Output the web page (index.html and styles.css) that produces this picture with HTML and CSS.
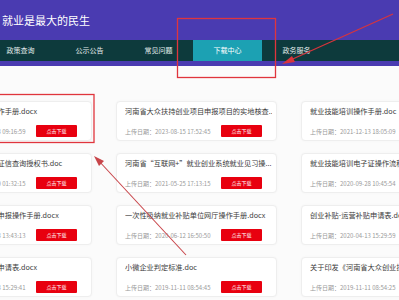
FILE: index.html
```html
<!DOCTYPE html>
<html>
<head>
    <title>下载中心</title>
    <link rel="stylesheet" href="styles.css">
</head>
<body>
    <div class="header">
        <div class="site-title">就业是最大的民生</div>
        <div class="nav">
            <a class="nav-item">政策查询</a>
            <a class="nav-item">公示公告</a>
            <a class="nav-item">常见问题</a>
            <a class="nav-item active">下载中心</a>
            <a class="nav-item">政务服务</a>
        </div>
    </div>

    <div class="main">
        <div class="file-grid" id="fileGrid">
            <!-- cards are filled in below -->
        </div>
    </div>

    <svg class="marks" width="399" height="300" viewBox="0 0 399 300">
        <rect x="177.5" y="18.5" width="98" height="59" fill="none" stroke="#e0353d" stroke-width="1.3"/>
        <rect x="-2" y="94.5" width="96" height="48" fill="none" stroke="#e0353d" stroke-width="1.3"/>
        <line x1="393" y1="14" x2="286" y2="62" stroke="#d8343c" stroke-width="1.2"/>
        <polygon points="282,64 292,56 295,62" fill="#d8343c"/>
        <line x1="186" y1="255" x2="98" y2="160" stroke="#c8454a" stroke-width="1.1"/>
        <polygon points="94,156 104,161 99,166" fill="#c8454a"/>
    </svg>

    <script>
        const files = [
            { name: "就业创业证网办操作手册.docx", date: "2023-08-13 09:16:59" },
            { name: "河南省大众扶持创业项目申报项目的实地核查...", date: "2023-08-15 17:52:45" },
            { name: "就业技能培训操作手册.doc", date: "2021-12-13 18:05:09" },
            { name: "个人创业担保贷款征信查询授权书.doc", date: "2020-12-30 01:32:15" },
            { name: "河南省“互联网+”就业创业系统就业见习操...", date: "2021-05-25 17:13:15" },
            { name: "就业技能培训电子证操作流程说明.docx", date: "2020-09-28 10:45:54" },
            { name: "创业孵化补贴网上申报操作手册.docx", date: "2020-06-13 13:43:13" },
            { name: "一次性吸纳就业补贴单位网厅操作手册.docx", date: "2020-06-12 16:50:50" },
            { name: "创业补贴-运营补贴申请表.docx", date: "2020-04-13 15:29:59" },
            { name: "创业担保贷款贴息申请表.docx", date: "2020-04-13 15:29:41" },
            { name: "小微企业判定标准.doc", date: "2019-11-11 08:54:45" },
            { name: "关于印发《河南省大众创业扶持项目管理办法》", date: "2019-11-11 08:54:25" }
        ];

        function populateFiles(data) {
            const grid = document.getElementById("fileGrid");
            grid.innerHTML = "";

            data.forEach((file) => {
                const card = document.createElement("div");
                card.className = "file-card";
                card.innerHTML = `
                    <div class="file-name">${file.name}</div>
                    <div class="file-meta">
                        <span class="file-date">上传日期：${file.date}</span>
                        <button class="download-btn">点击下载</button>
                    </div>
                `;
                grid.appendChild(card);
            });
        }

        populateFiles(files);
    </script>
</body>
</html>
```

FILE: styles.css
```css
body {
    font-family: "Noto Sans CJK SC", "Noto Sans", sans-serif;
    background-color: #fbfbfb;
    margin: 0;
    width: 399px;
    height: 300px;
    overflow: hidden;
    position: relative;
}

.header {
    background-color: #4a3bb1;
    padding-bottom: 5px;
}

.site-title {
    height: 40px;
    line-height: 40px;
    padding-left: 2px;
    color: #fff;
    font-size: 11px;
}

.nav {
    display: flex;
    height: 21px;
    background-color: #0d3a3c;
    margin-left: 0;
    padding-left: 0;
}

.nav-item {
    width: 69px;
    flex: none;
    text-align: center;
    line-height: 21px;
    font-size: 7px;
    color: #e6eeee;
}

.nav-item:first-child {
    margin-left: -14px;
}

.nav-item.active {
    background-color: #1ca1b3;
    color: #fff;
}

.main {
    padding-top: 35px;
}

.file-grid {
    display: grid;
    grid-template-columns: repeat(3, 161px);
    column-gap: 24px;
    row-gap: 12px;
    margin-left: -69px;
}

.file-card {
    height: 40px;
    box-sizing: border-box;
    padding: 4px 14px 0 8px;
    background-color: #fff;
    border: 1px solid #eeeeee;
    border-radius: 4px;
    box-shadow: 0 0 3px rgba(0, 0, 0, 0.03);
}

.file-name {
    font-size: 7.2px;
    line-height: 10px;
    color: #3a3a3a;
    white-space: nowrap;
    overflow: hidden;
    margin-right: -10px;
}

.file-meta {
    display: flex;
    align-items: center;
    justify-content: space-between;
    margin-top: 9px;
    height: 12px;
}

.file-date {
    font-size: 6px;
    color: #9a9a9a;
    white-space: nowrap;
}

.download-btn {
    width: 41px;
    height: 12px;
    flex: none;
    padding: 0;
    border: none;
    border-radius: 1px;
    background-color: #e8000f;
    color: #fff;
    font-family: inherit;
    font-size: 5px;
    line-height: 12px;
}

.marks {
    position: absolute;
    top: 0;
    left: 0;
    pointer-events: none;
}
```
